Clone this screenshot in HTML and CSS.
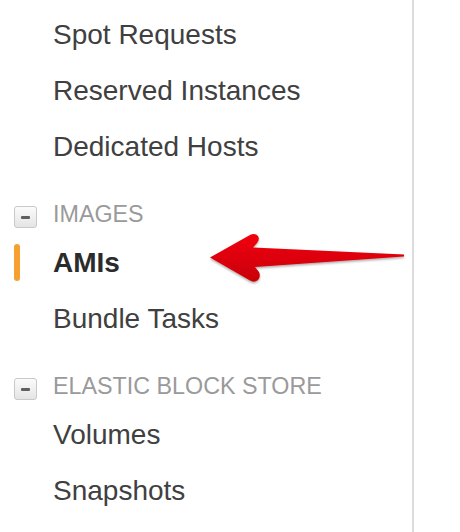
FILE: index.html
```html
<!DOCTYPE html>
<html>
<head>
<meta charset="utf-8">
<link rel="stylesheet" href="styles.css">
</head>
<body>
<div class="page">
  <nav class="sidebar">
    <ul class="nav">
      <li class="item">Spot Requests</li>
      <li class="item">Reserved Instances</li>
      <li class="item">Dedicated Hosts</li>
      <li class="group"><span class="toggle"><span class="bar"></span></span>IMAGES</li>
      <li class="item active">AMIs</li>
      <li class="item">Bundle Tasks</li>
      <li class="group"><span class="toggle"><span class="bar"></span></span>ELASTIC BLOCK STORE</li>
      <li class="item">Volumes</li>
      <li class="item">Snapshots</li>
    </ul>
    <svg class="arrow" width="215" height="65" viewBox="0 0 215 65">
      <defs>
        <linearGradient id="red" x1="0" y1="0" x2="0" y2="1">
          <stop offset="0" stop-color="#f2000b"/>
          <stop offset="1" stop-color="#c80006"/>
        </linearGradient>
        <filter id="sh" x="-10%" y="-30%" width="120%" height="160%">
          <feDropShadow dx="0" dy="1.5" stdDeviation="1" flood-color="#000" flood-opacity="0.35"/>
        </filter>
      </defs>
      <path filter="url(#sh)" fill="url(#red)" d="M10,32.5 L50,10 Q55,7.5 58,11 Q60,14.5 57,18 L53,22.5 L204,29.5 L204,31.5 L55,42 L59,47 Q61,51.5 58,55 Q54,58 50,55.5 Z"/>
    </svg>
  </nav>
</div>
</body>
</html>
```
FILE: styles.css
```css
html, body {
  margin: 0;
  padding: 0;
  background: #fff;
}
.page {
  width: 460px;
  height: 532px;
  overflow: hidden;
  display: flex;
}
.sidebar {
  position: relative;
  width: 412px;
  height: 532px;
  border-right: 2px solid #dcdcdc;
  font-family: "Liberation Sans", Arial, sans-serif;
}
.nav {
  list-style: none;
  margin: 0;
  padding: 7px 0 0 0;
}
.item {
  position: relative;
  height: 56px;
  line-height: 56px;
  font-size: 28px;
  color: #404040;
  padding-left: 53px;
  white-space: nowrap;
}
.item.active {
  font-weight: bold;
  color: #2b2b2b;
}
.item.active::before {
  content: "";
  position: absolute;
  left: 14px;
  top: 9px;
  width: 6px;
  height: 37px;
  border-radius: 3px;
  background: #f5a031;
}
.group {
  display: flex;
  align-items: center;
  margin-top: 18px;
  height: 42px;
  line-height: 42px;
  font-size: 23.3px;
  color: #9a9a9a;
  padding-left: 14px;
  white-space: nowrap;
}
.toggle {
  box-sizing: border-box;
  width: 23px;
  height: 22px;
  margin-top: 6px;
  margin-right: 16px;
  border: 1px solid #c9c9c9;
  border-radius: 3px;
  background: linear-gradient(#fbfbfb, #e4e4e4);
  display: flex;
  align-items: center;
  justify-content: center;
}
.bar {
  width: 9px;
  height: 3px;
  background: #5f5f5f;
  border-radius: 1px;
}
.arrow {
  position: absolute;
  left: 200px;
  top: 225px;
}
```
